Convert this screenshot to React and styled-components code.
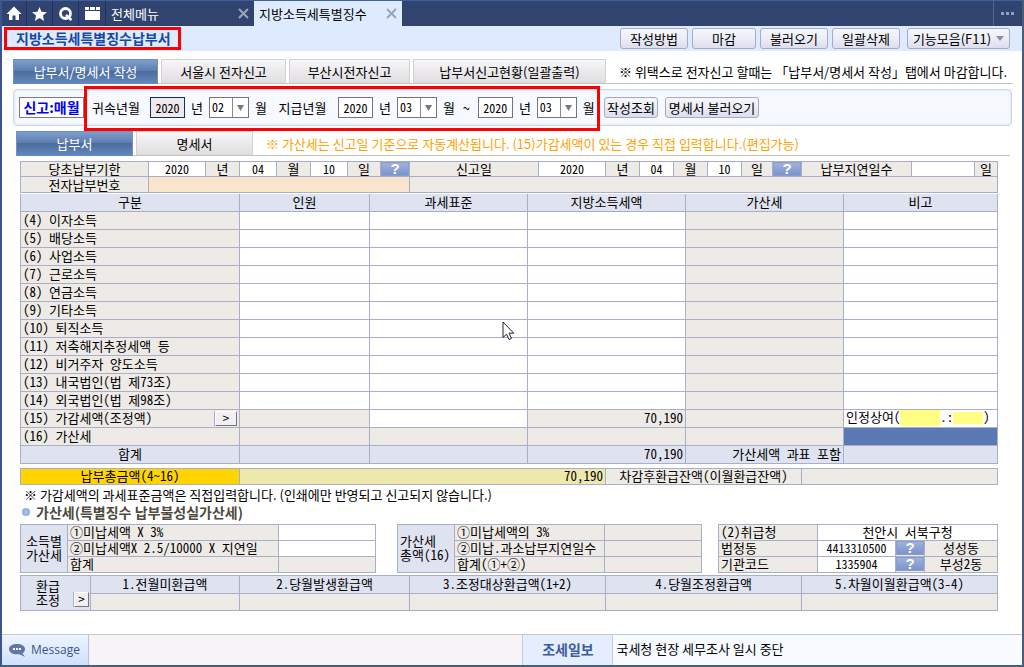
import React from 'react';
import styled, {createGlobalStyle, css} from 'styled-components';

const colors = {
  line: '#a9afc8',
  head: '#dfe2ef',
  locked: '#eeebe7',
  input: '#ffffff',
  peach: '#f7e6cd',
  gold: '#ffd400',
  khaki: '#eee9aa',
  selected: '#5a79b5',
  red: '#ff0000'
};

const UI_FONT = '"Noto Sans CJK KR", "Liberation Sans", sans-serif';
const GRID_FONT =
  '"Noto Sans Mono CJK KR", "Noto Sans CJK KR", "Liberation Mono", monospace';

const GlobalStyle = createGlobalStyle`
  * {
    box-sizing: border-box;
  }
  body {
    margin: 0;
    color: #000;
    font: 13px/16px ${UI_FONT};
  }
  button, input, select {
    font: inherit;
    color: inherit;
    margin: 0;
    padding: 0;
  }
`;

const Window = styled.div`
  position: relative;
  display: flex;
  flex-direction: column;
  min-height: 100vh;
  border: solid #4a5d78;
  border-width: 1px 2px 2px;
  border-top-color: #3d619f;
  border-left-color: #3c5490;
  background: #fff;
  white-space: nowrap;
`;

const TabBar = styled.nav`
  display: flex;
  height: 25px;
  background: #30446f;
  color: #fff;
`;

const IconButton = styled.button`
  display: flex;
  align-items: center;
  justify-content: center;
  width: ${p => p.$width || 26}px;
  border: 0;
  border-right: 1px solid #1f3158;
  background: none;
`;

const PageTab = styled.div`
  display: flex;
  align-items: center;
  justify-content: space-between;
  width: 148px;
  padding: 0 5px;
  color: ${p => (p.$active ? '#000' : '#fff')};
  background: ${p => (p.$active ? '#deebff' : 'none')};
`;

const CloseButton = styled.button`
  display: flex;
  border: 0;
  background: none;
  color: #98a5bd;
`;

const MoreButton = styled(IconButton)`
  margin-left: auto;
  border-right: 0;
  border-left: 1px solid #53658d;
`;

const TitleBar = styled.header`
  display: flex;
  align-items: center;
  height: 25px;
  padding: 0 12px 0 2px;
  background: #deebff;
`;

const Title = styled.h1`
  margin: 0 auto 0 0;
  padding: 0 7px 0 9px;
  border: 3px solid ${colors.red};
  color: #1748a5;
  font-size: 14px;
  line-height: 17px;
`;

const Toolbar = styled.div`
  display: flex;
  gap: 4px;
`;

const ToolButton = styled.button`
  display: flex;
  align-items: center;
  justify-content: center;
  gap: 5px;
  width: ${p => p.$width}px;
  height: 21px;
  border: 1px solid #a5a9ca;
  border-radius: 3px;
  background: linear-gradient(#f6f6fb, #ecedf6 50%, #dddeed);
  margin-left: ${p => (p.$spaced ? 3 : 0)}px;
`;

const Main = styled.main`
  padding: 8px 9px 20px 11px;
`;

const TabRow = styled.div`
  display: flex;
  gap: 3px;
  height: 25px;
  margin: 0 ${p => (p.$inset ? 3 : 0)}px;
  border-bottom: 1px solid #c2c2c2;
`;

const Tab = styled.button`
  width: ${p => p.$width}px;
  height: 25px;
  border: 1px solid #d2d2d2;
  border-bottom-color: #c2c2c2;
  background: linear-gradient(#f8f7f8, #ebe9eb 50%, #dfdddf);
  ${p =>
    p.$active &&
    css`
      border-color: #6f90c2;
      border-bottom-color: #5b8bd5;
      background: linear-gradient(#7e9dca, #5f80b2 45%, #4a6c9e 50%, #6487b9);
      color: #fff;
    `};
`;

const TabNote = styled.p`
  margin: 5px 0 0 10px;
  color: ${p => (p.$warn ? '#ffa200' : '#000')};
`;

const SearchPanel = styled.form`
  display: flex;
  align-items: center;
  height: 37px;
  margin: 5px 1px 5px 0;
  padding-left: 5px;
  border: 1px solid #cbd5ea;
  border-radius: 4px;
  background: #f6f9ff;
  box-shadow: inset 0 0 3px #d5dff2;
`;

const CycleBadge = styled.strong`
  width: 65px;
  height: 21px;
  border: 1px solid #7b7b88;
  background: #fff;
  color: #0000f0;
  font-size: 14px;
  line-height: 18px;
  text-align: center;
`;

const Period = styled.fieldset`
  position: relative;
  display: flex;
  align-items: center;
  gap: 6px;
  width: 516px;
  margin: 0 4px 0 0;
  padding: 0 0 0 8px;
  border: 0;
  &::after {
    content: '';
    position: absolute;
    inset: -11px 0 -13px;
    border: 3px solid ${colors.red};
    pointer-events: none;
  }
`;

const PeriodLabel = styled.label`
  width: ${p => p.$width}px;
  text-align: ${p => p.$align || 'left'};
`;

const Tilde = styled.span`
  width: 11px;
  text-align: center;
`;

const YearInput = styled.input`
  width: 35px;
  height: 21px;
  border: 1px solid ${p => (p.$focused ? '#12305c' : '#70757f')};
  background: ${p => (p.$focused ? '#efe9ec' : '#fff')};
  font: 12px/16px ${GRID_FONT};
  text-align: center;
`;

const MonthBox = styled.span`
  position: relative;
  display: inline-flex;
  svg {
    position: absolute;
    right: 5px;
    top: 8px;
    pointer-events: none;
  }
`;

const MonthField = styled.select`
  width: 40px;
  height: 21px;
  padding: 0 0 2px 2px;
  border: 1px solid #70757f;
  border-radius: 0;
  appearance: none;
  background: linear-gradient(90deg, #fff 22px, #8a8a92 22px, #8a8a92 23px, #fff 23px);
  font: 12px/16px ${GRID_FONT};
`;

const Sheet = styled.section`
  margin: 5px 15px 0 7px;
`;

const Grid = styled.table`
  width: 100%;
  margin-top: ${p => p.$top || 0}px;
  border-collapse: collapse;
  table-layout: fixed;
  font: 13px/14px ${GRID_FONT};
`;

const Row = styled.tr`
  height: ${p => p.$height || 18}px;
`;

const cell = css`
  height: inherit;
  padding: 0 ${p => (p.$pad === undefined ? 2 : p.$pad)}px;
  border: 1px solid ${colors.line};
  background: ${p => colors[p.$tone || 'input']};
  font-weight: normal;
  text-align: ${p => p.$align || 'left'};
`;

const Cell = styled.td`
  ${cell};
`;

const HeadCell = styled.th`
  ${cell};
  border-top-width: ${p => (p.$open ? 0 : 1)}px;
`;

const CellInput = styled.input`
  display: block;
  width: 100%;
  height: 14px;
  border: 0;
  outline: 0;
  background: none;
  font-size: 12px;
  text-align: center;
`;

const HelpButton = styled.button`
  display: block;
  width: 100%;
  height: 14px;
  border: 1px solid #8a9dcf;
  background: linear-gradient(#9fb2dd, #7c93cb);
  color: #fff;
  font: bold 15px/12px "Liberation Sans", Arial, sans-serif;
`;

const Split = styled.div`
  display: flex;
  align-items: ${p => p.$align || 'center'};
  justify-content: space-between;
`;

const OpenButton = styled.button`
  width: ${p => p.$width}px;
  height: 15px;
  border: 1px solid #fff;
  border-right-color: #777;
  border-bottom-color: #777;
  background: #f1eff1;
  box-shadow: -1px 0 #a9afc8;
  line-height: 12px;
`;

const Mask = styled.span`
  display: inline-block;
  width: ${p => p.$width}px;
  height: ${p => p.$height}px;
  background: #ffff85;
  vertical-align: middle;
`;

const Note = styled.p`
  margin: 2px 0 0 4px;
`;

const SubTitle = styled.h2`
  display: flex;
  align-items: center;
  gap: 6px;
  margin: 1px 0 3px 2px;
  color: #4d4a3e;
  font-size: 14px;
  line-height: 17px;
  &::before {
    content: '';
    width: 8px;
    height: 8px;
    border-radius: 50%;
    background: radial-gradient(#a8c8f5, #78a2e0);
  }
`;

const PenaltyRow = styled.div`
  display: grid;
  grid-template-columns: 361px 305px 1fr;
  gap: 16px;
  margin-bottom: 2px;
`;

const PenaltyBox = styled.div`
  padding-right: ${p => (p.$inset ? 5 : 0)}px;
`;

const StatusBar = styled.footer`
  display: flex;
  height: 31px;
  margin-top: auto;
  border-top: 1px solid #c4c7ce;
`;

const MessageButton = styled.button`
  display: flex;
  align-items: center;
  gap: 5px;
  width: 87px;
  padding-left: 7px;
  border: 0;
  border-right: 1px solid #b4c4dc;
  background: linear-gradient(#eef4ff, #cfe1fc);
  color: #3b5388;
  font: 12px/18px "Open Sans", "Noto Sans", sans-serif;
`;

const MessageText = styled.output`
  flex: 435 1 0;
  background: #f7f3f7;
`;

const NewsLink = styled.a`
  width: 91px;
  border: solid #c4cddf;
  border-width: 0 1px;
  background: #e5eeff;
  color: #3b5c9c;
  font-size: 14px;
  font-weight: bold;
  line-height: 28px;
  text-align: center;
  text-decoration: none;
`;

const NewsText = styled.span`
  flex: 407 1 0;
  padding-left: 3px;
  background: #f7faff;
  line-height: 28px;
`;

const Pointer = styled.svg`
  position: absolute;
  left: 500px;
  top: 320px;
  pointer-events: none;
`;

const CloseIcon = () => (
  <svg width="11" height="11" viewBox="0 0 11 11">
    <path d="M1 1L10 10M10 1L1 10" stroke="currentColor" strokeWidth="2" />
  </svg>
);

const Columns = ({widths}) => (
  <colgroup>
    {widths.map((w, i) => (
      <col key={i} style={w ? {width: w} : undefined} />
    ))}
  </colgroup>
);

const MonthSelect = ({label, value}) => (
  <MonthBox>
    <MonthField aria-label={label} defaultValue={value}>
      {['01', '02', '03', '04', '05', '06', '07', '08', '09', '10', '11', '12'].map(m => (
        <option key={m}>{m}</option>
      ))}
    </MonthField>
    <svg width="7" height="6" viewBox="0 0 7 6">
      <path d="M0 0H7L3.5 6Z" fill="#77777d" />
    </svg>
  </MonthBox>
);

const DateCells = ({label, values}) => (
  <>
    {[['년', values[0]], ['월', values[1]], ['일', values[2]]].map(([unit, value]) => (
      <React.Fragment key={unit}>
        <Cell $pad={0}>
          <CellInput aria-label={`${label} ${unit}`} defaultValue={value} />
        </Cell>
        <Cell $tone="locked" $align="center">{unit}</Cell>
      </React.Fragment>
    ))}
    <Cell $tone="locked" $pad={0}>
      <HelpButton type="button">?</HelpButton>
    </Cell>
  </>
);

const incomes = [
  '(4) 이자소득',
  '(5) 배당소득',
  '(6) 사업소득',
  '(7) 근로소득',
  '(8) 연금소득',
  '(9) 기타소득',
  '(10) 퇴직소득',
  '(11) 저축해지추정세액 등',
  '(12) 비거주자 양도소득',
  '(13) 내국법인(법 제73조)',
  '(14) 외국법인(법 제98조)'
];

const refunds = [
  '1.전월미환급액',
  '2.당월발생환급액',
  '3.조정대상환급액(1+2)',
  '4.당월조정환급액',
  '5.차월이월환급액(3-4)'
];

const TopTabs = () => (
  <TabBar>
    <IconButton $width={25} aria-label="홈">
      <svg width="16" height="15" viewBox="0 0 16 15">
        <path d="M8 0.500L15.500 8H13V14H9.500V9.500H6.500V14H3V8H0.500Z" fill="#fff" />
      </svg>
    </IconButton>
    <IconButton aria-label="즐겨찾기">
      <svg width="15" height="14" viewBox="0 0 15 14">
        <path
          d="M7.5 0L9.5 4.8L15 5.2L10.9 8.6L12.2 14L7.5 11.1L2.8 14L4.1 8.6L0 5.2L5.5 4.8Z"
          fill="#fff"
        />
      </svg>
    </IconButton>
    <IconButton aria-label="검색">
      <svg width="14" height="14" viewBox="0 0 14 14">
        <ellipse cx="6.5" cy="6.500" rx="5" ry="5" fill="none" stroke="#fff" strokeWidth="2.8" />
        <path d="M7 8L12.500 13" stroke="#fff" strokeWidth="2.600" />
      </svg>
    </IconButton>
    <IconButton $width={27} aria-label="일정">
      <svg width="15" height="13" viewBox="0 0 15 13" shapeRendering="crispEdges">
        <path d="M0 0H4V3H0ZM5 0H10V3H5ZM11 0H15V3H11ZM0 4H15V13H0Z" fill="#fff" />
      </svg>
    </IconButton>
    <PageTab>
      전체메뉴
      <CloseButton aria-label="전체메뉴 닫기"><CloseIcon /></CloseButton>
    </PageTab>
    <PageTab $active>
      지방소득세특별징수
      <CloseButton aria-label="지방소득세특별징수 닫기"><CloseIcon /></CloseButton>
    </PageTab>
    <MoreButton $width={29} aria-label="더보기">
      <svg width="14" height="3" viewBox="0 0 14 3">
        <path d="M0 0H3V3H0ZM5 0H8V3H5ZM10 0H13V3H10Z" fill="#94a0b8" />
      </svg>
    </MoreButton>
  </TabBar>
);

const SearchForm = () => (
  <SearchPanel onSubmit={e => e.preventDefault()}>
    <CycleBadge>신고:매월</CycleBadge>
    <Period>
      <PeriodLabel htmlFor="accrual" $width={52}>귀속년월</PeriodLabel>
      <YearInput id="accrual" defaultValue="2020" $focused />
      <span>년</span>
      <MonthSelect label="귀속월" value="02" />
      <span>월</span>
      <PeriodLabel htmlFor="paidFrom" $width={59} $align="center">지급년월</PeriodLabel>
      <YearInput id="paidFrom" defaultValue="2020" />
      <span>년</span>
      <MonthSelect label="지급 시작월" value="03" />
      <span>월</span>
      <Tilde>~</Tilde>
      <YearInput aria-label="지급 종료년" defaultValue="2020" />
      <span>년</span>
      <MonthSelect label="지급 종료월" value="03" />
      <span>월</span>
    </Period>
    <Toolbar>
      <ToolButton type="button" $width={54}>작성조회</ToolButton>
      <ToolButton type="button" $width={94} $spaced>명세서 불러오기</ToolButton>
    </Toolbar>
  </SearchPanel>
);

const DueTable = () => (
  <Grid>
    <Columns
      widths={[128, 57, 34, 37, 34, 37, 33, 29, null, 67, 34, 34, 34, 34, 31, 29, 110, 63, 23]}
    />
    <tbody>
      <Row $height={15}>
        <HeadCell $tone="locked" $align="center">당초납부기한</HeadCell>
        <DateCells label="당초납부기한" values={['2020', '04', '10']} />
        <HeadCell $tone="locked" $align="center">신고일</HeadCell>
        <DateCells label="신고일" values={['2020', '04', '10']} />
        <HeadCell $tone="locked" $align="center">납부지연일수</HeadCell>
        <Cell $pad={0}><CellInput aria-label="납부지연일수" /></Cell>
        <Cell $tone="locked" $align="center">일</Cell>
      </Row>
      <Row $height={16}>
        <HeadCell $tone="locked" $align="center">전자납부번호</HeadCell>
        <Cell $tone="peach" colSpan={7} />
        <Cell $tone="locked" colSpan={11} />
      </Row>
    </tbody>
  </Grid>
);

const IncomeTable = () => (
  <Grid $top={1}>
    <Columns widths={[219, 130, 158, 158, 158, null]} />
    <thead>
      <Row $height={17}>
        {['구분', '인원', '과세표준', '지방소득세액', '가산세', '비고'].map(h => (
          <HeadCell key={h} $tone="head" $align="center" $open>{h}</HeadCell>
        ))}
      </Row>
    </thead>
    <tbody>
      {incomes.map(name => (
        <Row key={name}>
          <HeadCell $tone="locked">{name}</HeadCell>
          <Cell />
          <Cell />
          <Cell />
          <Cell $tone="locked" />
          <Cell />
        </Row>
      ))}
      <Row>
        <HeadCell $tone="locked">
          <Split>
            (15) 가감세액(조정액)
            <OpenButton $width={22}>&gt;</OpenButton>
          </Split>
        </HeadCell>
        <Cell $tone="locked" />
        <Cell />
        <Cell $tone="locked" $align="right">70,190</Cell>
        <Cell $tone="locked" />
        <Cell>
          인정상여(<Mask $width={40} $height={16} />.:<Mask $width={30} $height={12} />)
        </Cell>
      </Row>
      <Row>
        <HeadCell $tone="locked">(16) 가산세</HeadCell>
        <Cell $tone="locked" />
        <Cell $tone="locked" />
        <Cell $tone="locked" />
        <Cell $tone="locked" />
        <Cell $tone="selected" />
      </Row>
      <Row>
        <HeadCell $tone="head" $align="center">합계</HeadCell>
        <Cell $tone="head" />
        <Cell $tone="head" />
        <Cell $tone="head" $align="right">70,190</Cell>
        <Cell $tone="head" $align="right">가산세액 과표 포함</Cell>
        <Cell $tone="head" />
      </Row>
    </tbody>
  </Grid>
);

const TotalTable = () => (
  <Grid $top={4}>
    <Columns widths={[219, 366, 196, null]} />
    <tbody>
      <Row $height={16}>
        <HeadCell $tone="gold" $align="center">납부총금액(4~16)</HeadCell>
        <Cell $tone="khaki" $align="right">70,190</Cell>
        <HeadCell $tone="locked" $align="center">차감후환급잔액(이월환급잔액)</HeadCell>
        <Cell $tone="locked" />
      </Row>
    </tbody>
  </Grid>
);

const Penalties = () => (
  <PenaltyRow>
    <PenaltyBox $inset>
      <Grid>
        <Columns widths={[47, 211, null]} />
        <tbody>
          <Row $height={16}>
            <HeadCell $tone="head" $align="center" rowSpan={3}>소득별<br />가산세</HeadCell>
            <HeadCell $tone="locked">①미납세액 X 3%</HeadCell>
            <Cell />
          </Row>
          <Row $height={16}>
            <HeadCell $tone="locked">②미납세액X 2.5/10000 X 지연일</HeadCell>
            <Cell />
          </Row>
          <Row $height={16}>
            <HeadCell $tone="locked">합계</HeadCell>
            <Cell $tone="locked" />
          </Row>
        </tbody>
      </Grid>
    </PenaltyBox>
    <PenaltyBox>
      <Grid>
        <Columns widths={[57, 150, null]} />
        <tbody>
          <Row $height={16}>
            <HeadCell $tone="head" rowSpan={3}>가산세<br />총액(16)</HeadCell>
            <HeadCell $tone="locked">①미납세액의 3%</HeadCell>
            <Cell $tone="locked" />
          </Row>
          <Row $height={16}>
            <HeadCell $tone="locked">②미납.과소납부지연일수</HeadCell>
            <Cell $tone="locked" />
          </Row>
          <Row $height={16}>
            <HeadCell $tone="locked">합계(①+②)</HeadCell>
            <Cell $tone="locked" />
          </Row>
        </tbody>
      </Grid>
    </PenaltyBox>
    <PenaltyBox>
      <Grid>
        <Columns widths={[99, 78, 29, null]} />
        <tbody>
          <Row $height={16}>
            <HeadCell $tone="locked">(2)취급청</HeadCell>
            <Cell $align="center" colSpan={3}>천안시 서북구청</Cell>
          </Row>
          {[['법정동', '4413310500', '성성동'], ['기관코드', '1335904', '부성2동']].map(
            ([name, code, place]) => (
              <Row key={name} $height={16}>
                <HeadCell $tone="locked">{name}</HeadCell>
                <Cell $pad={0}><CellInput aria-label={name} defaultValue={code} /></Cell>
                <Cell $tone="locked" $pad={0}>
                  <HelpButton type="button">?</HelpButton>
                </Cell>
                <Cell $tone="locked" $align="center">{place}</Cell>
              </Row>
            )
          )}
        </tbody>
      </Grid>
    </PenaltyBox>
  </PenaltyRow>
);

const RefundTable = () => (
  <Grid>
    <Columns widths={[70, 149, 170, 196, 196, null]} />
    <tbody>
      <Row>
        <HeadCell $tone="head" $pad={1} rowSpan={2}>
          <Split $align="flex-end">
            <span />
            <span>환급<br />조정</span>
            <OpenButton $width={15}>&gt;</OpenButton>
          </Split>
        </HeadCell>
        {refunds.map(name => (
          <HeadCell key={name} $tone="head" $align="center">{name}</HeadCell>
        ))}
      </Row>
      <Row $height={17}>
        {refunds.map(name => (
          <Cell key={name} $tone="locked" />
        ))}
      </Row>
    </tbody>
  </Grid>
);

const App = () => (
  <Window>
    <GlobalStyle />
    <TopTabs />
    <TitleBar>
      <Title>지방소득세특별징수납부서</Title>
      <Toolbar>
        <ToolButton $width={68}>작성방법</ToolButton>
        <ToolButton $width={64}>마감</ToolButton>
        <ToolButton $width={68}>불러오기</ToolButton>
        <ToolButton $width={68}>일괄삭제</ToolButton>
        <ToolButton $width={103} $spaced>
          기능모음(F11)
          <svg width="8" height="5" viewBox="0 0 8 5">
            <path d="M0 0H8L4 5Z" fill="#8790b0" />
          </svg>
        </ToolButton>
      </Toolbar>
    </TitleBar>
    <Main>
      <TabRow>
        <Tab $width={145} $active>납부서/명세서 작성</Tab>
        <Tab $width={125}>서울시 전자신고</Tab>
        <Tab $width={121}>부산시전자신고</Tab>
        <Tab $width={193}>납부서신고현황(일괄출력)</Tab>
        <TabNote>※ 위택스로 전자신고 할때는 「납부서/명세서 작성」탭에서 마감합니다.</TabNote>
      </TabRow>
      <SearchForm />
      <TabRow $inset>
        <Tab $width={117} $active>납부서</Tab>
        <Tab $width={117}>명세서</Tab>
        <TabNote $warn>
          ※ 가산세는 신고일 기준으로 자동계산됩니다. (15)가감세액이 있는 경우 직접 입력합니다.(편집가능)
        </TabNote>
      </TabRow>
      <Sheet>
        <DueTable />
        <IncomeTable />
        <TotalTable />
        <Note>※ 가감세액의 과세표준금액은 직접입력합니다. (인쇄에만 반영되고 신고되지 않습니다.)</Note>
        <SubTitle>가산세(특별징수 납부불성실가산세)</SubTitle>
        <Penalties />
        <RefundTable />
      </Sheet>
    </Main>
    <StatusBar>
      <MessageButton>
        <svg width="17" height="13" viewBox="0 0 17 13">
          <path
            d="M8 0C12.5 0 16 2 16 5C16 7 15 8.300 13.500 9.200L16 13L10.500 10.200C4 11 0 8.500 0 5C0 2 3.500 0 8 0Z"
            fill="#6176a8"
          />
          <path d="M4 4H6V6H4ZM7 4H9V6H7ZM10 4H12V6H10Z" fill="#fff" />
        </svg>
        Message
      </MessageButton>
      <MessageText />
      <NewsLink href="#news">조세일보</NewsLink>
      <NewsText>국세청 현장 세무조사 일시 중단</NewsText>
    </StatusBar>
    <Pointer width="13" height="20" viewBox="0 0 13 20">
      <path
        d="M1 1V16.500L4.500 13.200L7 18.500L9.500 17.400L7 12.200H11.800Z"
        fill="#fff"
        stroke="#222"
      />
    </Pointer>
  </Window>
);

export default App;
